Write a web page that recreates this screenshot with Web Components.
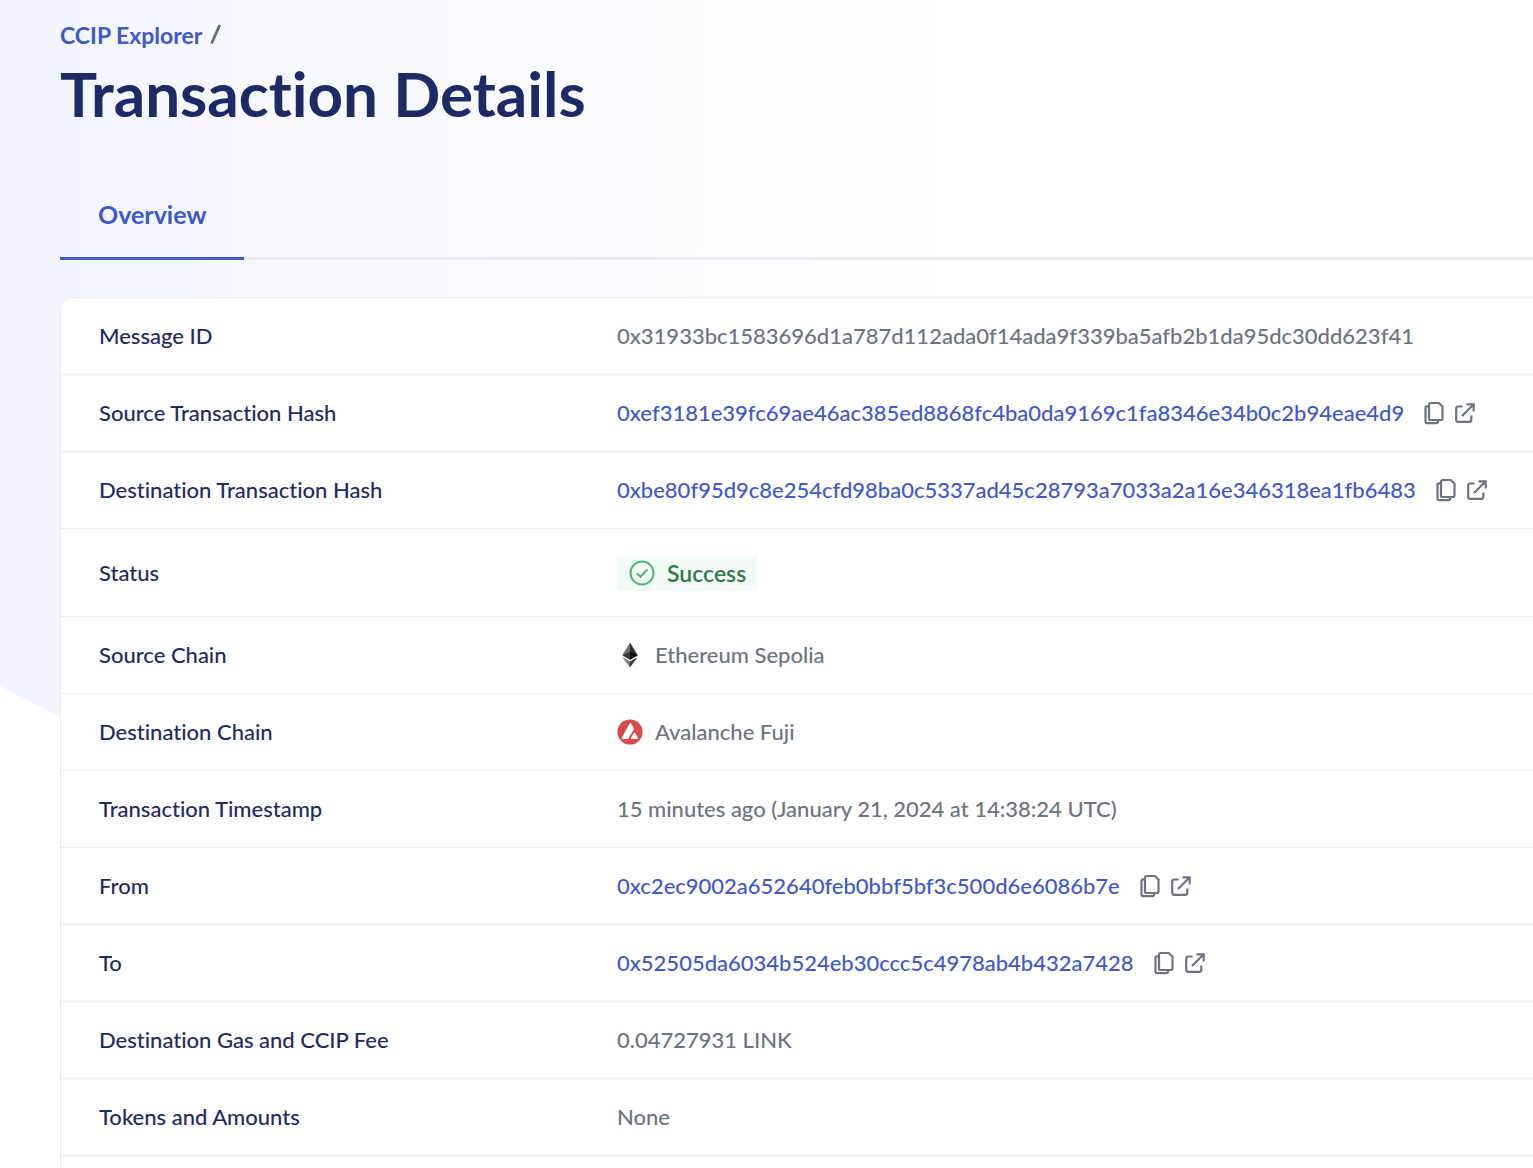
<!DOCTYPE html>
<html lang="en">
<head>
<meta charset="utf-8">
<meta name="viewport" content="width=device-width, initial-scale=1">
<title>Transaction Details | CCIP Explorer</title>
<style>
  body { margin: 0; background: #fff; }
</style>
</head>
<body>
<ccip-page>
  <ccip-header slot="header" heading="Transaction Details">
    <ccip-crumb href="#explorer">CCIP Explorer</ccip-crumb>
  </ccip-header>
  <ccip-tabs slot="tabs">Overview</ccip-tabs>
  <tx-details></tx-details>
</ccip-page>

<script>
class BaseElement extends HTMLElement {
  connectedCallback() {
    if (this.shadowRoot) return;
    this.attachShadow({ mode: 'open' }).innerHTML = this.render();
  }
}

customElements.define('ccip-page', class extends BaseElement {
  render() {
    return `
      <style>
        :host {
          --blue: #4058cc; --navy: #1e2a66; --grey: #6d7380; --line: #ececee;
          display: block; position: relative; min-height: 100vh; overflow: hidden;
          font: 500 22px/28px Lato, "Liberation Sans", sans-serif;
          font-variant-ligatures: none; color: var(--grey);
        }
        .backdrop {
          position: absolute; top: 0; left: 0; width: 1000px; height: 717px;
          background: linear-gradient(90deg, #f0f4ff 0, #f4f6fe 80px, #f8f9fe 300px, #fafbfe 560px, #fdfdff 780px, #fff 100%);
          clip-path: polygon(0 0, 100% 0, 100% 100%, 60px 100%, 0 686px);
        }
        .content { position: relative; display: flex; flex-direction: column; padding: 20px 0 0 60px; }
        .main { padding-top: 37px; }
      </style>
      <div class="backdrop"></div>
      <div class="content">
        <slot name="header"></slot>
        <slot name="tabs"></slot>
        <div class="main"><slot></slot></div>
      </div>`;
  }
});

customElements.define('ccip-crumb', class extends BaseElement {
  render() {
    return `
      <style>
        :host { display: flex; align-items: center; gap: 8px; font-size: 23px; line-height: 30px; }
        a { color: var(--blue); font-weight: 700; text-decoration: none; }
        svg { display: block; }
      </style>
      <a href="${this.getAttribute('href')}"><slot></slot></a>
      <svg width="12" height="22" viewBox="0 0 12 22" aria-hidden="true"><path d="M1.500 19.500 9.800 1" stroke="#6d7075" stroke-width="2.800"/></svg>`;
  }
});

customElements.define('ccip-header', class extends BaseElement {
  render() {
    return `
      <style>
        :host { display: block; }
        h1 { margin: 6px 0 0; font-size: 62px; line-height: 74px; font-weight: 700; color: var(--navy); }
      </style>
      <nav aria-label="Breadcrumb"><slot></slot></nav>
      <h1>${this.getAttribute('heading')}</h1>`;
  }
});

customElements.define('ccip-tabs', class extends BaseElement {
  render() {
    return `
      <style>
        :host { display: flex; margin-top: 40px; box-shadow: inset 0 -3px #ebecef; }
        button {
          padding: 27px 38px 26px; border: 0; border-bottom: 3px solid var(--blue);
          background: none; color: var(--blue); font: inherit; font-size: 25px; line-height: 34px; font-weight: 700;
        }
      </style>
      <div role="tablist"><button type="button" role="tab" aria-selected="true"><slot></slot></button></div>`;
  }
});

customElements.define('status-badge', class extends BaseElement {
  render() {
    return `
      <style>
        :host { display: inline-flex; align-items: center; gap: 12px; padding: 4px 12px; border-radius: 4px; background: #f4fbf7; color: #2f7a47; font-size: 23px; font-weight: 600; line-height: 28px; }
        svg { display: block; }
      </style>
      <svg width="26" height="26" viewBox="0 0 26 26" fill="none" stroke="#4fb573" stroke-width="2" aria-hidden="true">
        <circle cx="13" cy="13" r="11.500"/><path d="M7.800 13.300 11.600 16.800 18.400 9.400"/>
      </svg>
      <slot></slot>`;
  }
});

const CHAIN_ICONS = {
  ethereum: `
    <path d="M13 .5 5.300 13.200 13 17.700z" fill="#6f6f72"/><path d="M13 .5 20.700 13.200 13 17.700z" fill="#2c2c2e"/>
    <path d="M5.300 13.200 13 9.800v7.900z" fill="#3b3b3d"/><path d="M20.700 13.200 13 9.800v7.900z" fill="#121214"/>
    <path d="M5.300 14.900 13 19.400v6z" fill="#77777a"/><path d="M20.700 14.900 13 19.400v6z" fill="#3a3a3c"/>`,
  avalanche: `
    <circle cx="13" cy="13" r="12.600" fill="#d94b4a"/>
    <path d="M12.700 4.600q.8-1.300 1.600 0l2.100 3.900q.7 1.300 0 2.500l-4.500 7.800q-.7 1.200-2 1.200H5.700q-1.600 0-.8-1.400z" fill="#fff"/>
    <path d="M16.700 14.200q.8-1.300 1.600 0l2.600 4.500q.7 1.300-.7 1.300h-5.300q-1.500 0-.8-1.300z" fill="#fff"/>`
};

customElements.define('chain-name', class extends BaseElement {
  render() {
    return `
      <style>
        :host { display: flex; align-items: center; gap: 12px; }
        svg { display: block; }
      </style>
      <svg width="26" height="26" viewBox="0 0 26 26" aria-hidden="true">${CHAIN_ICONS[this.getAttribute('chain')]}</svg>
      <slot></slot>`;
  }
});

customElements.define('hash-link', class extends BaseElement {
  render() {
    return `
      <style>
        :host { display: flex; align-items: center; }
        a { color: var(--blue); text-decoration: none; }
        button { margin: 0 11px 0 20px; padding: 0; border: 0; background: none; color: inherit; }
        .open { color: inherit; }
        svg { display: block; fill: none; stroke: currentColor; stroke-width: 2.200; stroke-linejoin: round; }
      </style>
      <a href="#"><slot></slot></a>
      <button type="button" aria-label="Copy">
        <svg width="20" height="24" viewBox="0 0 20 24">
          <path d="M6.500 2h8.300L18.500 5.500v11.700q0 1.800-1.800 1.800H6.500Q5 19 5 17.400V3.600Q5 2 6.500 2z"/>
          <path d="M5 5.300H3Q1.500 5.300 1.500 6.800v13.800Q1.500 22.200 3.100 22.200h9.300Q14 22.200 14 20.600V19"/>
        </svg>
      </button>
      <a class="open" href="#" aria-label="Open in block explorer">
        <svg width="20" height="20" viewBox="0 0 20 20">
          <path d="M7.500 3.500H3.200Q1.200 3.500 1.200 5.500V16.800q0 2 2 2h11.100q2 0 2-2v-4.300"/>
          <path d="M7 13 18.300 1.700M11.500 1.400h7.200v7.200" stroke-linejoin="miter"/>
        </svg>
      </a>`;
  }
});

customElements.define('tx-details', class extends BaseElement {
  render() {
    const rows = [
      ['Message ID', '0x31933bc1583696d1a787d112ada0f14ada9f339ba5afb2b1da95dc30dd623f41'],
      ['Source Transaction Hash', '<hash-link>0xef3181e39fc69ae46ac385ed8868fc4ba0da9169c1fa8346e34b0c2b94eae4d9</hash-link>'],
      ['Destination Transaction Hash', '<hash-link>0xbe80f95d9c8e254cfd98ba0c5337ad45c28793a7033a2a16e346318ea1fb6483</hash-link>'],
      ['Status', '<status-badge>Success</status-badge>'],
      ['Source Chain', '<chain-name chain="ethereum">Ethereum Sepolia</chain-name>'],
      ['Destination Chain', '<chain-name chain="avalanche">Avalanche Fuji</chain-name>'],
      ['Transaction Timestamp', '15 minutes ago (January 21, 2024 at 14:38:24 UTC)'],
      ['From', '<hash-link>0xc2ec9002a652640feb0bbf5bf3c500d6e6086b7e</hash-link>'],
      ['To', '<hash-link>0x52505da6034b524eb30ccc5c4978ab4b432a7428</hash-link>'],
      ['Destination Gas and CCIP Fee', '0.04727931 LINK'],
      ['Tokens and Amounts', 'None']
    ];
    return `
      <style>
        :host { display: block; border: 1px solid var(--line); border-right: 0; border-top-left-radius: 12px; background: #fff; padding-bottom: 24px; }
        table { width: 100%; border-collapse: separate; border-spacing: 0; }
        th, td { padding: 24px 0; border-bottom: 1px solid var(--line); text-align: left; vertical-align: middle; white-space: nowrap; }
        th { width: 556px; box-sizing: border-box; padding-left: 38px; color: var(--navy); font-weight: 500; }
        tr:has(status-badge) { height: 88px; }
        status-badge { vertical-align: top; }
      </style>
      <table><tbody>${rows.map(([k, v]) => `<tr><th scope="row">${k}</th><td>${v}</td></tr>`).join('')}</tbody></table>`;
  }
});
</script>
</body>
</html>
